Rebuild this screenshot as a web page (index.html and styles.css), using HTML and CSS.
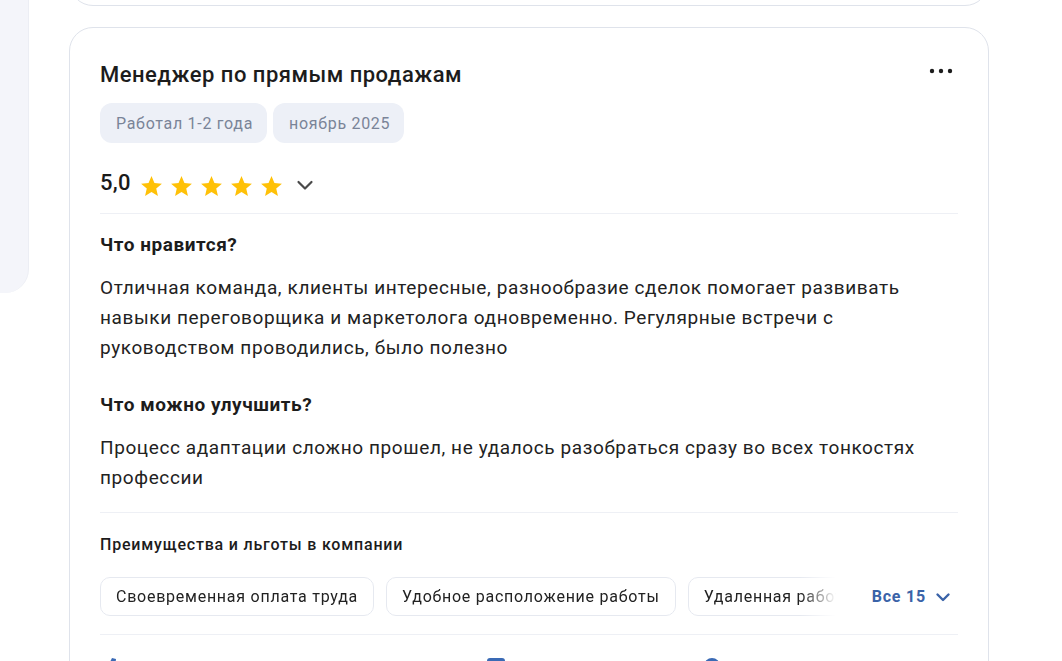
FILE: index.html
```html
<!DOCTYPE html>
<html lang="ru">
<head>
<meta charset="utf-8">
<title>Отзыв</title>
<link rel="stylesheet" href="styles.css">
</head>
<body>
<div class="page">
  <aside class="sidebar"></aside>
  <main class="feed">
    <div class="prev-card"></div>
    <article class="card">
      <header class="card-head">
        <h2 class="title">Менеджер по прямым продажам</h2>
        <svg class="dots" width="24" height="24" viewBox="0 0 24 24"><circle cx="3" cy="12" r="2.2"/><circle cx="12" cy="12" r="2.2"/><circle cx="21" cy="12" r="2.2"/></svg>
      </header>
      <div class="tags">
        <span class="tag">Работал 1-2 года</span>
        <span class="tag">ноябрь 2025</span>
      </div>
      <div class="rating">
        <span class="score">5,0</span>
        <div class="stars">
          <svg viewBox="0 0 24 24"><path d="M12 17.27L18.18 21l-1.64-7.03L22 9.24l-7.19-.61L12 2 9.19 8.63 2 9.24l5.46 4.73L5.82 21z"/></svg>
          <svg viewBox="0 0 24 24"><path d="M12 17.27L18.18 21l-1.64-7.03L22 9.24l-7.19-.61L12 2 9.19 8.63 2 9.24l5.46 4.73L5.82 21z"/></svg>
          <svg viewBox="0 0 24 24"><path d="M12 17.27L18.18 21l-1.64-7.03L22 9.24l-7.19-.61L12 2 9.19 8.63 2 9.24l5.46 4.73L5.82 21z"/></svg>
          <svg viewBox="0 0 24 24"><path d="M12 17.27L18.18 21l-1.64-7.03L22 9.24l-7.19-.61L12 2 9.19 8.63 2 9.24l5.46 4.73L5.82 21z"/></svg>
          <svg viewBox="0 0 24 24"><path d="M12 17.27L18.18 21l-1.64-7.03L22 9.24l-7.19-.61L12 2 9.19 8.63 2 9.24l5.46 4.73L5.82 21z"/></svg>
        </div>
        <svg class="chev" width="24" height="24" viewBox="0 0 24 24"><path d="M5.5 9l6.5 6.5 6.5-6.5"/></svg>
      </div>
      <section class="texts">
        <h3 class="q">Что нравится?</h3>
        <p class="a">Отличная команда, клиенты интересные, разнообразие сделок помогает развивать навыки переговорщика и маркетолога одновременно. Регулярные встречи с руководством проводились, было полезно</p>
        <h3 class="q q2">Что можно улучшить?</h3>
        <p class="a">Процесс адаптации сложно прошел, не удалось разобраться сразу во всех тонкостях профессии</p>
      </section>
      <section class="benefits">
        <h4 class="b-title">Преимущества и льготы в компании</h4>
        <div class="b-row">
          <div class="chips">
            <span class="chip">Своевременная оплата труда</span>
            <span class="chip">Удобное расположение работы</span>
            <span class="chip">Удаленная работа</span>
          </div>
          <button class="more">Все 15
            <svg width="24" height="24" viewBox="0 0 24 24"><path d="M6.5 9.5l5.5 5.5 5.5-5.5"/></svg>
          </button>
        </div>
      </section>
      <footer class="actions">
        <span class="act act1"><svg width="24" height="24" viewBox="0 0 24 24"><path d="M10 2l-4 8v11h11l3-10h-7l1-8z"/></svg>Полезно</span>
        <span class="act act2"><svg width="24" height="24" viewBox="0 0 24 24"><rect x="3" y="2" width="18" height="15" rx="3"/></svg>Ответить</span>
        <span class="act act3"><svg width="24" height="24" viewBox="0 0 24 24"><circle cx="12" cy="10" r="8"/></svg>Поделиться</span>
      </footer>
    </article>
  </main>
</div>
</body>
</html>
```

FILE: styles.css
```css
* { box-sizing: border-box; }
html, body { margin: 0; padding: 0; background: #fff; }
body {
  font-family: Roboto, "Noto Sans", "Liberation Sans", sans-serif;
  color: #1f1f1f;
  overflow: hidden;
  height: 661px;
  letter-spacing: 0.7px;
}
.page { display: flex; align-items: flex-start; }
.sidebar {
  width: 29px;
  height: 293px;
  flex: none;
  background: #f4f5fa;
  border-right: 1px solid #eceef4;
  border-bottom-right-radius: 24px;
}
.feed {
  margin-left: 40px;
  width: 920px;
  flex: none;
}
.prev-card {
  height: 60px;
  margin-top: -54px;
  border: 1px solid #dfe3eb;
  border-radius: 24px;
  margin-bottom: 21px;
}
.card {
  border: 1px solid #dfe3eb;
  border-radius: 24px;
  padding: 33px 30px 0 30px;
  min-height: 700px;
}
.card-head {
  display: flex;
  justify-content: space-between;
  align-items: flex-start;
}
.title {
  margin: 0;
  font-size: 22px;
  line-height: 28px;
  font-weight: 500;
  color: #1c1c1c;
  letter-spacing: 0.5px;
}
.dots { fill: #1d1d1d; margin-top: -2px; margin-right: 5px; }
.tags { display: flex; gap: 6px; margin-top: 14px; }
.tag {
  height: 40px;
  display: flex;
  align-items: center;
  padding: 0 14px 0 16px;
  background: #edf0f7;
  border-radius: 12px;
  font-size: 16px;
  color: #7a8498;
}
.rating {
  display: flex;
  align-items: center;
  margin-top: 26px;
  height: 28px;
}
.score { font-size: 22px; font-weight: 500; line-height: 28px; margin-right: 8px; color: #1a1a1a; letter-spacing: 0.3px; }
.stars { display: flex; gap: 5px; margin-top: 6px; }
.stars svg { fill: #ffc107; display: block; width: 25px; height: 25px; }
.chev { fill: none; stroke: #4a4a4a; stroke-width: 2.2; stroke-linecap: round; stroke-linejoin: round; margin-left: 9px; margin-top: 4px; }
.texts {
  margin-top: 16px;
  border-top: 1px solid #eef0f5;
  padding: 19px 0 19px;
}
.q { margin: 0; font-size: 19px; line-height: 24px; font-weight: 700; color: #1c1c1c; letter-spacing: 0.55px; }
.q2 { margin-top: 30px; }
.a { margin: 16px 0 0; font-size: 19px; line-height: 30px; color: #222; letter-spacing: 0.6px; }
.benefits {
  border-top: 1px solid #eef0f5;
  padding: 22px 0 18px;
}
.b-title { margin: 0; font-size: 16px; line-height: 20px; font-weight: 500; color: #1c1c1c; letter-spacing: 0.8px; }
.b-row { display: flex; align-items: center; margin-top: 22px; }
.chips {
  flex: 1;
  min-width: 0;
  display: flex;
  gap: 12px;
  overflow: hidden;
  -webkit-mask-image: linear-gradient(to right, #000 calc(100% - 40px), transparent calc(100% - 4px));
  mask-image: linear-gradient(to right, #000 calc(100% - 40px), transparent calc(100% - 4px));
}
.chip {
  flex: none;
  height: 39px;
  display: flex;
  align-items: center;
  padding: 0 15px;
  border: 1px solid #e6e9f0;
  border-radius: 10px;
  font-size: 16px;
  letter-spacing: 0.75px;
  color: #222;
  white-space: nowrap;
}
.more {
  flex: none;
  display: flex;
  align-items: center;
  gap: 5px;
  border: 0;
  background: none;
  padding: 0 3px 0 32px;
  font-family: inherit;
  font-size: 16px;
  letter-spacing: 0.8px;
  font-weight: 700;
  color: #3a63a8;
}
.more svg { fill: none; stroke: #3a63a8; stroke-width: 2.4; stroke-linecap: round; stroke-linejoin: round; }
.actions {
  border-top: 1px solid #eef0f5;
  display: flex;
  padding-top: 21px;
  font-size: 16px;
  line-height: 20px;
  color: #3a63a8;
}
.act { display: flex; align-items: center; gap: 8px; }
.act svg { fill: #3a6ab5; flex: none; }
.act1 { margin-left: 2px; width: 382px; }
.act2 { width: 216px; }
```
